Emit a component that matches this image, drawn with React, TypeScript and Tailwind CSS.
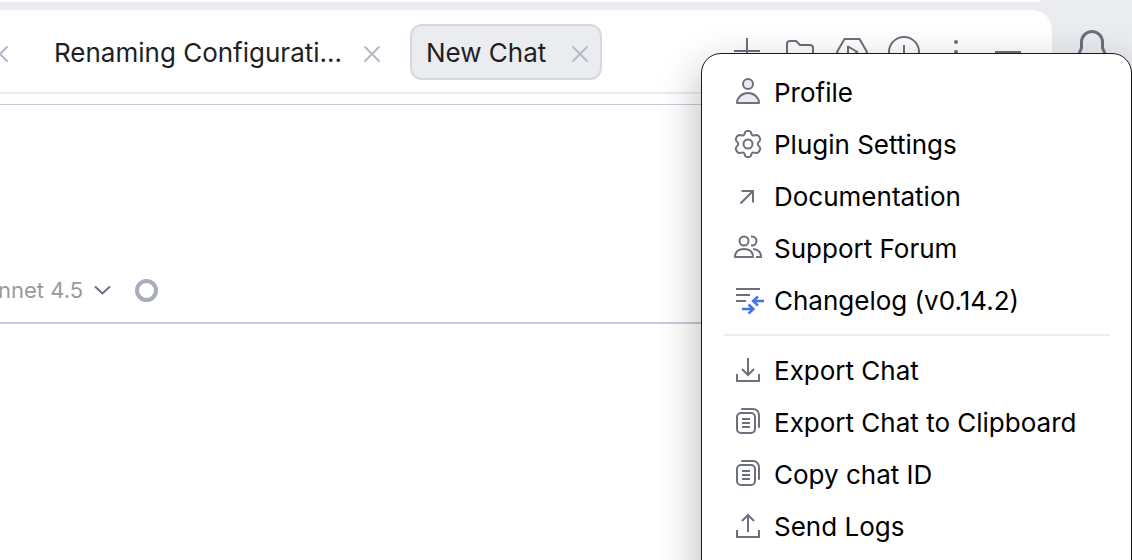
import React from 'react';

type IconProps = { children: React.ReactNode; className?: string };

function Icon({ children, className = 'text-[#6c707e]' }: IconProps) {
  return (
    <svg
      viewBox="0 0 32 32"
      fill="none"
      stroke="currentColor"
      strokeWidth="2"
      className={`size-8 shrink-0 ${className}`}
      aria-hidden="true"
    >
      {children}
    </svg>
  );
}

const CloseIcon = () => (
  <Icon className="text-[#b5b8c9]">
    <path d="M9 11l14 14M23 11L9 25" strokeLinecap="round" />
  </Icon>
);

const CopyIcon = () => (
  <Icon>
    <rect x="5" y="7" width="18" height="20" rx="4" />
    <path d="M10 3h11a6 6 0 0 1 6 6v12" strokeLinecap="round" />
    <path d="M10 13h8M10 17h8M10 21h8" />
  </Icon>
);

const links = [
  {
    label: 'Profile',
    icon: (
      <Icon>
        <circle cx="16" cy="8" r="5" fill="#ebecf0" />
        <path d="M5 27a11 10 0 0 1 22 0z" fill="#ebecf0" strokeLinejoin="round" />
      </Icon>
    ),
  },
  {
    label: 'Plugin Settings',
    icon: (
      <Icon>
        <circle cx="16" cy="16" r="4.500" />
        <path
          d="M13.600 3.500Q14 3 16 3T18.400 3.500L20 7Q20.500 7.700 21.500 7.500L25 7Q26.500 7.300 27.500 9.300Q28.700 11.300 28 12.500L26 15Q25.600 16 26 17L28 19.500Q28.700 20.700 27.500 22.700Q26.500 24.700 25 25L21.500 24.500Q20.500 24.300 20 25L18.400 28.500Q18 29 16 29T13.600 28.500L12 25Q11.500 24.300 10.500 24.500L7 25Q5.500 24.700 4.500 22.700Q3.300 20.700 4 19.500L6 17Q6.400 16 6 15L4 12.500Q3.300 11.300 4.500 9.300Q5.500 7.300 7 7L10.500 7.500Q11.500 7.700 12 7Z"
          strokeLinejoin="round"
        />
      </Icon>
    ),
  },
  {
    label: 'Documentation',
    icon: (
      <Icon>
        <path d="M8.500 23.500L21 11M9.500 11H21v11.500" />
      </Icon>
    ),
  },
  {
    label: 'Support Forum',
    icon: (
      <Icon>
        <circle cx="12" cy="9" r="4.500" />
        <path d="M3 25c0-5 3.500-8 9-8s9 3 9 8z" strokeLinejoin="round" />
        <path d="M19 4.500h1a4.500 4.500 0 0 1 0 9h-1M21 17c5 .5 8 3.500 8 8h-5" />
      </Icon>
    ),
  },
  {
    label: 'Changelog (v0.14.2)',
    icon: (
      <Icon>
        <path d="M4 5h24M4 11h14M4 17h10" />
        <g stroke="#3f73f0" strokeWidth="2.4">
          <path d="M32 17H21M26 12.500L21 17l5 4.500M10 25h11M16.500 20.500l5 4.500-5 4.500" />
        </g>
      </Icon>
    ),
  },
];

const actions = [
  {
    label: 'Export Chat',
    icon: (
      <Icon>
        <path d="M16 4v16M10 15l6 6 6-6M5 20v7h22v-7" />
      </Icon>
    ),
  },
  { label: 'Export Chat to Clipboard', icon: <CopyIcon /> },
  { label: 'Copy chat ID', icon: <CopyIcon /> },
  {
    label: 'Send Logs',
    icon: (
      <Icon>
        <path d="M16 22V5M10 11l6-6 6 6M5 20v7h22v-7" />
      </Icon>
    ),
  },
];

const tools = [
  { label: 'New chat', icon: <path d="M2 15h26M15 2v26" /> },
  {
    label: 'Open folder',
    icon: <path d="M3 8a3 3 0 0 1 3-3h6l4 4h10a3 3 0 0 1 3 3v12a3 3 0 0 1-3 3H6a3 3 0 0 1-3-3z" />,
  },
  {
    label: 'Run',
    icon: (
      <>
        <path d="M8.500 3h15L31 16l-7.500 13h-15L1 16z" strokeLinejoin="round" />
        <path d="M12 10.500l9.500 5.500L12 21.500z" strokeLinejoin="round" />
      </>
    ),
  },
  {
    label: 'History',
    icon: (
      <>
        <circle cx="16" cy="16" r="15" />
        <path d="M16 9v8l5 4" />
      </>
    ),
  },
  {
    label: 'More',
    icon: (
      <g fill="currentColor" stroke="none">
        <circle cx="16" cy="6" r="2" />
        <circle cx="16" cy="16" r="2" />
        <circle cx="16" cy="26" r="2" />
      </g>
    ),
  },
  { label: 'Hide', icon: <path d="M3 16h26" /> },
];

function MenuItem({ label, icon }: { label: string; icon: React.ReactNode }) {
  return (
    <button type="button" role="menuitem" className="flex h-13 w-full items-center gap-2.5 pl-[30px] text-left text-black">
      {icon}
      <span className="pt-0.5 whitespace-nowrap">{label}</span>
    </button>
  );
}

export default function App() {
  return (
    <div className="relative flex h-screen overflow-hidden bg-[#ebecf0] font-['Inter',sans-serif] text-[26px] leading-8 text-[#1e1f22]">
      <main className="flex min-w-0 flex-1 flex-col">
        <div className="mr-3 h-0.5 shrink-0 rounded-br bg-white"></div>
        <div className="mt-2 flex flex-1 flex-col overflow-hidden rounded-tr-[20px] bg-white">
          <header className="flex h-21 shrink-0 items-center justify-between border-b-2 border-[#ebecf0] pt-0.5 pr-7">
            <div className="flex shrink-0 items-center gap-4">
              <div className="-ml-4 flex pr-1.5">
                <button type="button" aria-label="Close tab">
                  <CloseIcon />
                </button>
              </div>
              <div className="flex h-14 w-[356px] items-center justify-between rounded-xl border-2 border-transparent pr-1 pl-3.5">
                <button type="button" className="pt-0.5 whitespace-nowrap">Renaming Configurati...</button>
                <button type="button" aria-label="Close tab">
                  <CloseIcon />
                </button>
              </div>
              <div className="flex h-14 w-48 items-center justify-between rounded-xl border-2 border-[#d6d8df] bg-[#ebecf0] pr-1 pl-3.5">
                <button type="button" className="pt-0.5 whitespace-nowrap">New Chat</button>
                <button type="button" aria-label="Close tab">
                  <CloseIcon />
                </button>
              </div>
            </div>
            <div className="flex items-center gap-5">
              {tools.map((tool) => (
                <button key={tool.label} type="button" aria-label={tool.label}>
                  <Icon>{tool.icon}</Icon>
                </button>
              ))}
            </div>
          </header>
          <section className="mt-2.5 flex h-55 shrink-0 flex-col justify-end border-t border-b-2 border-[#c9c9da] pb-4">
            <div className="flex items-center gap-4">
              <button type="button" className="-ml-0.5 flex items-center gap-1 text-[22px] text-[#9a9a9a]">
                nnet 4.5
                <Icon>
                  <path d="M8 12.500l7.500 7 7.500-7" />
                </Icon>
              </button>
              <span className="size-[23px] rounded-full border-4 border-[#a8adbd]"></span>
            </div>
          </section>
        </div>
      </main>
      <aside className="flex w-20 shrink-0 justify-center pt-7">
        <button type="button" aria-label="Notifications" className="size-10">
          <svg viewBox="0 0 40 40" fill="none" stroke="#6c707e" strokeWidth="3" className="size-10" aria-hidden="true">
            <path d="M9.500 14a10.500 10.500 0 0 1 21 0v6l4 9v2h-29v-2l4-9z" strokeLinejoin="round" />
            <path d="M15 36h10" />
          </svg>
        </button>
      </aside>
      <div
        role="menu"
        className="absolute top-[53px] right-0 -bottom-8 w-[431px] rounded-[20px] border border-[#1a1a1a] bg-white pt-3 shadow-[0_16px_44px_rgba(0,0,0,0.3)]"
      >
        {links.map((item) => (
          <MenuItem key={item.label} {...item} />
        ))}
        <hr className="my-2 mr-[21px] ml-[22px] border-t-2 border-[#ebecf0]" />
        {actions.map((item) => (
          <MenuItem key={item.label} {...item} />
        ))}
      </div>
    </div>
  );
}
